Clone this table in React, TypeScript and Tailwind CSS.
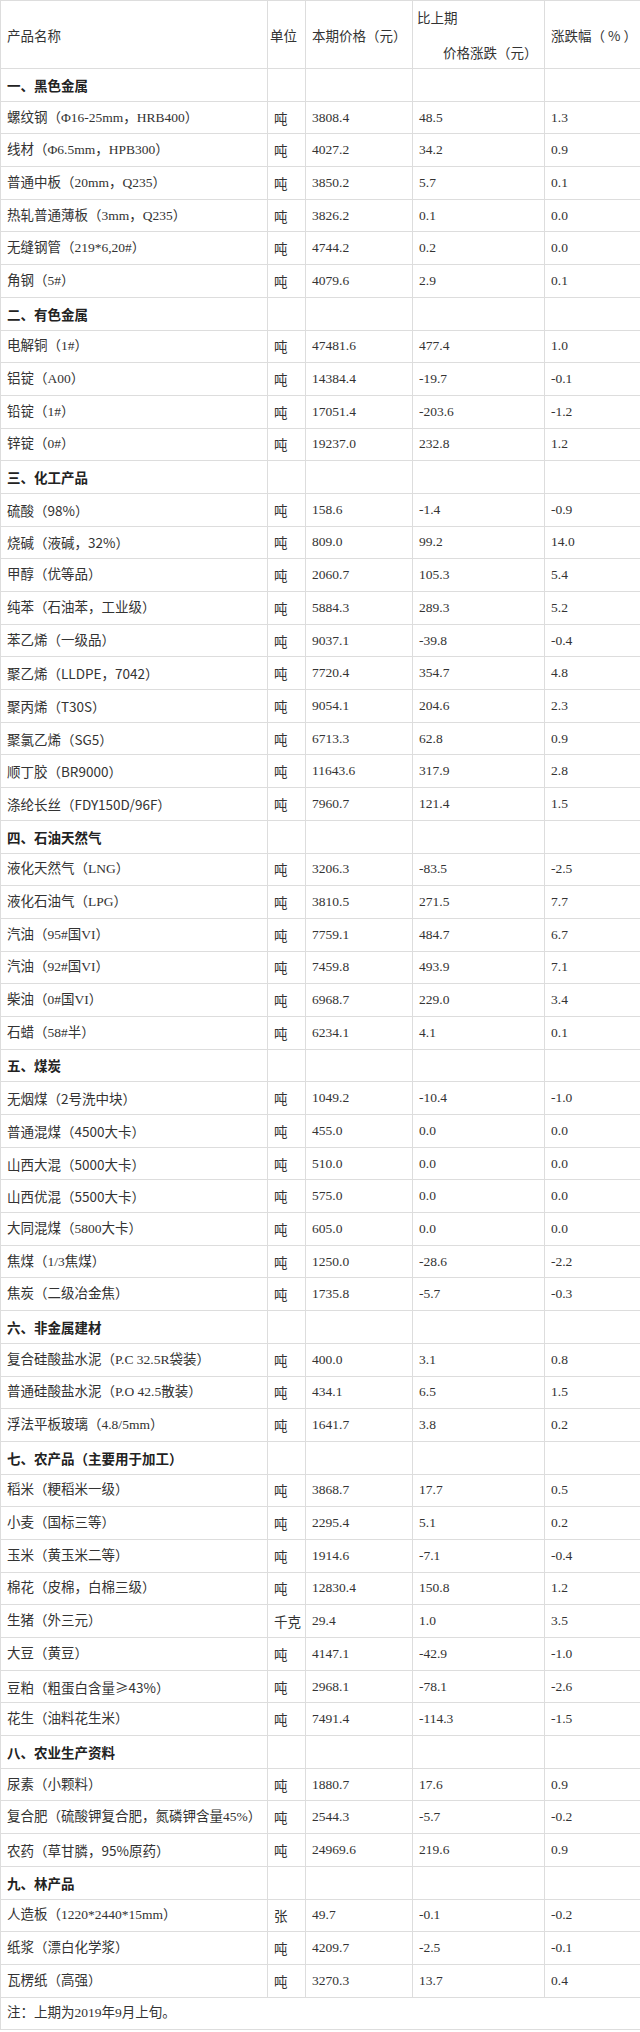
type Row = [string, string, string, string, string, boolean?];

const sections: { title: string; rows: Row[] }[] = [
  {
    title: "一、黑色金属",
    rows: [
      ["螺纹钢（Φ16-25mm，HRB400）", "吨", "3808.4", "48.5", "1.3"],
      ["线材（Φ6.5mm，HPB300）", "吨", "4027.2", "34.2", "0.9"],
      ["普通中板（20mm，Q235）", "吨", "3850.2", "5.7", "0.1"],
      ["热轧普通薄板（3mm，Q235）", "吨", "3826.2", "0.1", "0.0"],
      ["无缝钢管（219*6,20#）", "吨", "4744.2", "0.2", "0.0"],
      ["角钢（5#）", "吨", "4079.6", "2.9", "0.1"],
    ],
  },
  {
    title: "二、有色金属",
    rows: [
      ["电解铜（1#）", "吨", "47481.6", "477.4", "1.0"],
      ["铝锭（A00）", "吨", "14384.4", "-19.7", "-0.1"],
      ["铅锭（1#）", "吨", "17051.4", "-203.6", "-1.2"],
      ["锌锭（0#）", "吨", "19237.0", "232.8", "1.2"],
    ],
  },
  {
    title: "三、化工产品",
    rows: [
      ["硫酸（98%）", "吨", "158.6", "-1.4", "-0.9", true],
      ["烧碱（液碱，32%）", "吨", "809.0", "99.2", "14.0", true],
      ["甲醇（优等品）", "吨", "2060.7", "105.3", "5.4"],
      ["纯苯（石油苯，工业级）", "吨", "5884.3", "289.3", "5.2"],
      ["苯乙烯（一级品）", "吨", "9037.1", "-39.8", "-0.4"],
      ["聚乙烯（LLDPE，7042）", "吨", "7720.4", "354.7", "4.8", true],
      ["聚丙烯（T30S）", "吨", "9054.1", "204.6", "2.3", true],
      ["聚氯乙烯（SG5）", "吨", "6713.3", "62.8", "0.9", true],
      ["顺丁胶（BR9000）", "吨", "11643.6", "317.9", "2.8", true],
      ["涤纶长丝（FDY150D/96F）", "吨", "7960.7", "121.4", "1.5", true],
    ],
  },
  {
    title: "四、石油天然气",
    rows: [
      ["液化天然气（LNG）", "吨", "3206.3", "-83.5", "-2.5"],
      ["液化石油气（LPG）", "吨", "3810.5", "271.5", "7.7"],
      ["汽油（95#国VI）", "吨", "7759.1", "484.7", "6.7"],
      ["汽油（92#国VI）", "吨", "7459.8", "493.9", "7.1"],
      ["柴油（0#国VI）", "吨", "6968.7", "229.0", "3.4"],
      ["石蜡（58#半）", "吨", "6234.1", "4.1", "0.1"],
    ],
  },
  {
    title: "五、煤炭",
    rows: [
      ["无烟煤（2号洗中块）", "吨", "1049.2", "-10.4", "-1.0", true],
      ["普通混煤（4500大卡）", "吨", "455.0", "0.0", "0.0", true],
      ["山西大混（5000大卡）", "吨", "510.0", "0.0", "0.0", true],
      ["山西优混（5500大卡）", "吨", "575.0", "0.0", "0.0", true],
      ["大同混煤（5800大卡）", "吨", "605.0", "0.0", "0.0"],
      ["焦煤（1/3焦煤）", "吨", "1250.0", "-28.6", "-2.2"],
      ["焦炭（二级冶金焦）", "吨", "1735.8", "-5.7", "-0.3"],
    ],
  },
  {
    title: "六、非金属建材",
    rows: [
      ["复合硅酸盐水泥（P.C 32.5R袋装）", "吨", "400.0", "3.1", "0.8"],
      ["普通硅酸盐水泥（P.O 42.5散装）", "吨", "434.1", "6.5", "1.5"],
      ["浮法平板玻璃（4.8/5mm）", "吨", "1641.7", "3.8", "0.2"],
    ],
  },
  {
    title: "七、农产品（主要用于加工）",
    rows: [
      ["稻米（粳稻米一级）", "吨", "3868.7", "17.7", "0.5"],
      ["小麦（国标三等）", "吨", "2295.4", "5.1", "0.2"],
      ["玉米（黄玉米二等）", "吨", "1914.6", "-7.1", "-0.4"],
      ["棉花（皮棉，白棉三级）", "吨", "12830.4", "150.8", "1.2"],
      ["生猪（外三元）", "千克", "29.4", "1.0", "3.5"],
      ["大豆（黄豆）", "吨", "4147.1", "-42.9", "-1.0"],
      ["豆粕（粗蛋白含量≥43%）", "吨", "2968.1", "-78.1", "-2.6", true],
      ["花生（油料花生米）", "吨", "7491.4", "-114.3", "-1.5"],
    ],
  },
  {
    title: "八、农业生产资料",
    rows: [
      ["尿素（小颗料）", "吨", "1880.7", "17.6", "0.9"],
      ["复合肥（硫酸钾复合肥，氮磷钾含量45%）", "吨", "2544.3", "-5.7", "-0.2"],
      ["农药（草甘膦，95%原药）", "吨", "24969.6", "219.6", "0.9", true],
    ],
  },
  {
    title: "九、林产品",
    rows: [
      ["人造板（1220*2440*15mm）", "张", "49.7", "-0.1", "-0.2"],
      ["纸浆（漂白化学浆）", "吨", "4209.7", "-2.5", "-0.1"],
      ["瓦楞纸（高强）", "吨", "3270.3", "13.7", "0.4"],
    ],
  },
];

const cell = "border border-[#dddddd] h-[32.7px] px-[6px] py-0 align-middle whitespace-nowrap";

export default function App() {
  return (
    <div className="w-[640px] bg-white text-[#333333] text-[13.5px] leading-[20px] font-['Liberation_Serif','Noto_Sans_CJK_SC',serif]">
      <table className="w-[640px] border-collapse table-fixed">
        <colgroup>
          <col className="w-[267px]" />
          <col className="w-[38px]" />
          <col className="w-[107px]" />
          <col className="w-[132px]" />
          <col className="w-[96px]" />
        </colgroup>
        <thead>
          <tr>
            <td className="border border-[#dddddd] h-[68px] px-[6px] align-middle font-['Noto_Sans_CJK_SC',sans-serif]">产品名称</td>
            <td className="border border-[#dddddd] px-[2px] align-middle font-['Noto_Sans_CJK_SC',sans-serif]">单位</td>
            <td className="border border-[#dddddd] px-[6px] align-middle whitespace-nowrap font-['Noto_Sans_CJK_SC',sans-serif]">本期价格（元）</td>
            <td className="border border-[#dddddd] px-[4px] align-middle whitespace-nowrap font-['Noto_Sans_CJK_SC',sans-serif]">
              <div className="flex flex-col gap-[15px]">
                <span>比上期</span>
                <span className="pl-[26px]">价格涨跌（元）</span>
              </div>
            </td>
            <td className="border border-[#dddddd] px-[6px] align-middle whitespace-nowrap font-['Noto_Sans_CJK_SC',sans-serif]">涨跌幅（ % ）</td>
          </tr>
        </thead>
        <tbody>
          {sections.map((s) => (
            <>
              <tr key={s.title}>
                <td className={`${cell} font-bold font-['Noto_Sans_CJK_SC',sans-serif] text-[#222222]`}>{s.title}</td>
                <td className={cell}></td>
                <td className={cell}></td>
                <td className={cell}></td>
                <td className={cell}></td>
              </tr>
              {s.rows.map((r) => (
                <tr key={r[0]}>
                  <td className={r[5] ? `${cell} font-['Noto_Sans_CJK_SC',sans-serif]` : cell}>{r[0]}</td>
                  <td className={`${cell} px-[2px] font-['Noto_Sans_CJK_SC',sans-serif]`}>{r[1]}</td>
                  <td className={cell}>{r[2]}</td>
                  <td className={cell}>{r[3]}</td>
                  <td className={cell}>{r[4]}</td>
                </tr>
              ))}
            </>
          ))}
          <tr>
            <td colSpan={5} className={cell}>
              注：上期为2019年9月上旬。
            </td>
          </tr>
        </tbody>
      </table>
    </div>
  );
}
